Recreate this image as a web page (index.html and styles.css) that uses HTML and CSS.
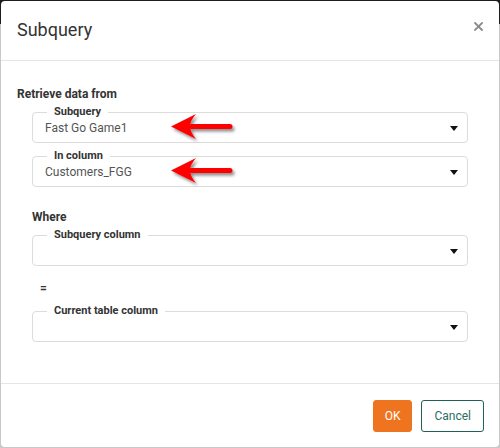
FILE: index.html
```html
<!DOCTYPE html>
<html>
<head>
<meta charset="utf-8">
<link rel="stylesheet" href="styles.css">
</head>
<body>
<div class="dialog">
  <header class="dlg-header">
    <h2 class="dlg-title">Subquery</h2>
    <button class="dlg-close" aria-label="Close">
      <svg width="9" height="9" viewBox="0 0 9 9"><path d="M1 1L8 8M8 1L1 8" stroke="#8a8a8a" stroke-width="1.8" stroke-linecap="square"/></svg>
    </button>
  </header>
  <main class="dlg-body">
    <div class="section-label">Retrieve data from</div>
    <div class="group">
      <fieldset class="field first">
        <legend>Subquery</legend>
        <div class="select"><span class="value">Fast Go Game1</span><svg class="caret" width="8" height="5" viewBox="0 0 8 5"><path d="M0 0H8L4 5Z" fill="#111"/></svg></div>
      </fieldset>
      <fieldset class="field">
        <legend>In column</legend>
        <div class="select"><span class="value">Customers_FGG</span><svg class="caret" width="8" height="5" viewBox="0 0 8 5"><path d="M0 0H8L4 5Z" fill="#111"/></svg></div>
      </fieldset>
    </div>
    <div class="group where">
      <div class="section-label">Where</div>
      <fieldset class="field tight">
        <legend>Subquery column</legend>
        <div class="select"><span class="value"></span><svg class="caret" width="8" height="5" viewBox="0 0 8 5"><path d="M0 0H8L4 5Z" fill="#111"/></svg></div>
      </fieldset>
      <div class="equals">=</div>
      <fieldset class="field after-eq">
        <legend>Current table column</legend>
        <div class="select"><span class="value"></span><svg class="caret" width="8" height="5" viewBox="0 0 8 5"><path d="M0 0H8L4 5Z" fill="#111"/></svg></div>
      </fieldset>
    </div>
  </main>
  <footer class="dlg-footer">
    <button class="btn btn-ok">OK</button>
    <button class="btn btn-cancel">Cancel</button>
  </footer>
  <svg class="annot" width="500" height="448" viewBox="0 0 500 448">
    <defs>
      <filter id="sh" x="-20%" y="-50%" width="140%" height="200%">
        <feDropShadow dx="2" dy="2.5" stdDeviation="1.6" flood-color="#000" flood-opacity="0.45"/>
      </filter>
    </defs>
    <g filter="url(#sh)" fill="#ff0000" stroke="#ff0000">
      <g>
        <path d="M171 126.5L196 114Q190 121 190 126.5Q190 132 196 139Z" stroke="none"/>
        <line x1="191" y1="126.5" x2="230" y2="126.5" stroke-width="5" stroke-linecap="round"/>
      </g>
      <g>
        <path d="M171 170.5L196 158Q190 165 190 170.5Q190 176 196 183Z" stroke="none"/>
        <line x1="191" y1="170.5" x2="230" y2="170.5" stroke-width="5" stroke-linecap="round"/>
      </g>
    </g>
  </svg>
</div>
</body>
</html>
```
FILE: styles.css
```css
* { box-sizing: border-box; }
html, body { margin: 0; padding: 0; }
body {
  width: 500px;
  height: 448px;
  overflow: hidden;
  background: linear-gradient(#1c1c1c 0, #1c1c1c 24px, #c9c9c9 24px);
  font-family: Roboto, "Liberation Sans", Arial, sans-serif;
  color: #333;
}
.dialog {
  position: relative;
  width: 500px;
  height: 448px;
  border: 1px solid transparent;
  border-radius: 5px;
  background: #fff;
  background-clip: padding-box;
  display: flex;
  flex-direction: column;
}
.dlg-header {
  height: 60px;
  border-bottom: 1px solid #e5e5e5;
  padding: 17px 16px 0 16px;
  display: flex;
  justify-content: space-between;
  align-items: flex-start;
}
.dlg-title {
  margin: 0;
  font-size: 18px;
  line-height: 24px;
  font-weight: 400;
  color: #333;
}
.dlg-close {
  border: 0;
  background: none;
  padding: 0;
  margin-top: 4px;
  width: 9px;
  height: 9px;
  display: block;
  line-height: 0;
}
.dlg-body {
  flex: 1;
  padding: 25px 16px 0 16px;
}
.section-label {
  font-size: 12px;
  line-height: 16px;
  font-weight: 700;
  color: #333;
}
.group {
  margin: 0 15px;
}
.group.where {
  margin-top: 22px;
}
.field {
  margin: 7px 0 0 0;
  padding: 0 9px 4px 12px;
  border: 1px solid #dcdcdc;
  border-radius: 4px;
  min-width: 0;
}
.field.first { margin-top: 4px; }
.field.tight { margin-top: 4px; }
.field.after-eq { margin-top: 9px; }
.field legend {
  font-size: 11px;
  line-height: 12px;
  font-weight: 700;
  color: #333;
  padding: 0 7px;
  margin-left: 2px;
}
.select {
  height: 20px;
  display: flex;
  align-items: center;
}
.value {
  flex: 1;
  font-size: 12px;
  line-height: 16px;
  color: #555;
}
.caret { display: block; flex: none; }
.equals {
  margin-top: 14px;
  padding-left: 8px;
  font-size: 12px;
  line-height: 16px;
  font-weight: 700;
  color: #333;
}
.dlg-footer {
  border-top: 1px solid #e5e5e5;
  padding: 16px 15px 15px 16px;
  display: flex;
  justify-content: flex-end;
  gap: 9px;
}
.btn {
  height: 32px;
  font-family: Roboto, "Liberation Sans", Arial, sans-serif;
  font-size: 12px;
  border-radius: 3px;
  padding: 0 11px;
  cursor: pointer;
}
.btn-ok {
  background: #ef7420;
  border: 1px solid #ef7420;
  color: #fff;
}
.btn-cancel {
  background: #fff;
  border: 1px solid #1f6357;
  color: #2b6e62;
  padding: 0 12px;
}
.annot {
  position: absolute;
  left: -1px;
  top: -1px;
  pointer-events: none;
}
```
